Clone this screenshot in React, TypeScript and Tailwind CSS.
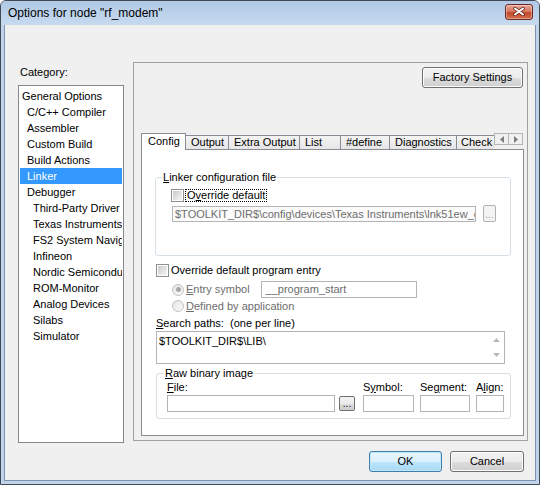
import React from "react";

const ui = "font-['Liberation_Sans',Arial,sans-serif]";

const winBtn =
  "flex items-center justify-center rounded-[3px] border border-[#707070] bg-[linear-gradient(to_bottom,#f2f2f2_0%,#ebebeb_50%,#dddddd_51%,#cfcfcf_100%)] shadow-[inset_0_0_0_1px_#fcfcfc] text-[11px] text-black";

const categories: { label: string; indent: number; selected?: boolean }[] = [
  { label: "General Options", indent: 2 },
  { label: "C/C++ Compiler", indent: 7 },
  { label: "Assembler", indent: 7 },
  { label: "Custom Build", indent: 7 },
  { label: "Build Actions", indent: 7 },
  { label: "Linker", indent: 7, selected: true },
  { label: "Debugger", indent: 7 },
  { label: "Third-Party Driver", indent: 13 },
  { label: "Texas Instruments", indent: 13 },
  { label: "FS2 System Navigator", indent: 13 },
  { label: "Infineon", indent: 13 },
  { label: "Nordic Semiconductor", indent: 13 },
  { label: "ROM-Monitor", indent: 13 },
  { label: "Analog Devices", indent: 13 },
  { label: "Silabs", indent: 13 },
  { label: "Simulator", indent: 13 },
];

const tabs = [
  { label: "Config", w: "w-[45px]" },
  { label: "Output", w: "w-[44px]" },
  { label: "Extra Output", w: "w-[72px]" },
  { label: "List", w: "w-[42px]" },
  { label: "#define", w: "w-[50px]" },
  { label: "Diagnostics", w: "w-[68px]" },
];

function Checkbox() {
  return (
    <span className="flex h-[13px] w-[13px] shrink-0 items-center justify-center border border-[#8e8f8f] bg-white">
      <span className="h-[9px] w-[9px] bg-gradient-to-br from-[#c9c9c9] to-[#f7f7f7]" />
    </span>
  );
}

function Radio({ checked }: { checked?: boolean }) {
  return (
    <span className="flex h-[12px] w-[12px] shrink-0 items-center justify-center rounded-full border border-[#c2c2c2] bg-gradient-to-br from-[#e3e3e3] to-[#fbfbfb]">
      {checked && <span className="h-[5px] w-[5px] rounded-full bg-[#a8a8a8]" />}
    </span>
  );
}

function SmallBrowse({ disabled, h }: { disabled?: boolean; h: string }) {
  return (
    <span
      className={`flex ${h} shrink-0 items-end justify-center rounded-[2px] border pb-[2px] text-[10px] leading-[8px] ${
        disabled
          ? "border-[#adb2b5] bg-[#f4f4f4] text-[#9a9a9a]"
          : "border-[#707070] bg-[linear-gradient(to_bottom,#f2f2f2_0%,#ebebeb_50%,#dddddd_51%,#cfcfcf_100%)] text-black"
      }`}
    >
      ...
    </span>
  );
}

function Arrow({ dir, color }: { dir: "up" | "down" | "left" | "right"; color: string }) {
  const pts = {
    up: "0,4 3.5,0 7,4",
    down: "0,0 3.5,4 7,0",
    left: "4,0 0,3.5 4,7",
    right: "0,0 4,3.5 0,7",
  }[dir];
  const vertical = dir === "up" || dir === "down";
  return (
    <svg width={vertical ? 7 : 4} height={vertical ? 4 : 7} viewBox={vertical ? "0 0 7 4" : "0 0 4 7"}>
      <polygon points={pts} fill={color} />
    </svg>
  );
}

export default function App() {
  return (
    <div className={`${ui} h-[485px] w-[540px] overflow-hidden text-[11px] text-black`}>
      <div className="flex h-full w-full flex-col rounded-t-[6px] border border-[#3f4a56] bg-[#bfd4eb] px-[3px] pb-[3px]">
        {/* title bar */}
        <div className="-mx-[3px] flex h-[24px] shrink-0 items-center justify-between rounded-t-[5px] bg-[linear-gradient(to_bottom,#afc8e5_0%,#bcd2ea_50%,#c6daef_100%)] pl-[7px] pr-[6px]">
          <span className="text-[12px] leading-[14px] text-black">Options for node "rf_modem"</span>
          <span className="mb-[3px] flex h-[16px] w-[28px] items-center justify-center rounded-[3px] border border-[#6b2a22] bg-[linear-gradient(to_bottom,#e8a898_0%,#d9785f_45%,#c3462c_55%,#d2704f_100%)] shadow-[inset_0_0_0_1px_rgba(255,255,255,0.35)]">
            <svg width="12" height="9" viewBox="0 0 12 9">
              <path d="M2 1.5 L10 7.5 M10 1.5 L2 7.5" stroke="#5a1d14" strokeWidth="3.4" strokeLinecap="round" />
              <path d="M2 1.5 L10 7.5 M10 1.5 L2 7.5" stroke="#ffffff" strokeWidth="2" strokeLinecap="round" />
            </svg>
          </span>
        </div>

        {/* client area */}
        <div className="flex flex-1 flex-col border border-t-0 border-[#7d93ad] bg-[#f0f0f0]">
          <div className="mt-[37px] flex pl-[13px]">
            {/* category column */}
            <div className="flex w-[106px] flex-col">
              <div className="h-[23px] pl-[2px] pt-[3px] leading-[14px]">Category:</div>
              <div className="h-[358px] overflow-hidden border border-[#828790] bg-white pt-[2px]">
                {categories.map((c) => (
                  <div
                    key={c.label}
                    className={`mx-px h-[16px] overflow-hidden whitespace-nowrap text-[11px] leading-[16px] ${
                      c.selected ? "bg-[#3399ff] text-white" : "text-black"
                    }`}
                    style={{ paddingLeft: c.indent }}
                  >
                    {c.label}
                  </div>
                ))}
              </div>
            </div>

            {/* options panel */}
            <div className="ml-[9px] flex h-[379px] w-[395px] flex-col border border-[#a0a0a0] pb-[3px] pl-[7px] pr-[3px]">
              <div className="mt-[4px] flex justify-end pr-[1px]">
                <button className={`${winBtn} h-[21px] w-[101px]`}>Factory Settings</button>
              </div>

              {/* tab strip */}
              <div className="mt-[45px] flex h-[16px] items-end">
                {tabs.map((t, i) =>
                  i === 0 ? (
                    <div
                      key={t.label}
                      className={`relative z-10 -mb-px h-[17px] ${t.w} shrink-0 border border-b-0 border-[#898c95] bg-white pl-[6px] pt-[1px] leading-[13px]`}
                    >
                      {t.label}
                    </div>
                  ) : (
                    <div
                      key={t.label}
                      className={`-ml-px h-[14px] ${t.w} shrink-0 border border-b-0 border-[#898c95] bg-[linear-gradient(to_bottom,#f4f4f4,#e6e6e6)] pl-[5px] leading-[13px]`}
                    >
                      {t.label}
                    </div>
                  )
                )}
                <div className="-ml-px h-[14px] w-[38px] shrink-0 overflow-hidden whitespace-nowrap border border-b-0 border-r-0 border-[#898c95] bg-[linear-gradient(to_bottom,#f4f4f4,#e6e6e6)] pl-[4px] leading-[13px]">
                  Check
                </div>
                <div className="flex self-start">
                  <span className="flex h-[12px] w-[15px] items-center justify-center border border-[#b5b5b5] bg-[#f0f0f0]">
                    <Arrow dir="left" color="#7a7a7a" />
                  </span>
                  <span className="-ml-px flex h-[12px] w-[15px] items-center justify-center border border-[#b5b5b5] bg-[#f0f0f0]">
                    <Arrow dir="right" color="#7a7a7a" />
                  </span>
                </div>
              </div>

              {/* tab page */}
              <div className="flex h-[287px] w-[383px] flex-col border border-[#898c95] bg-white">
                <fieldset className="ml-[13px] mt-[20px] w-[356px] rounded-[3px] border border-[#d5dfe5] pb-[33px]">
                  <legend className="ml-[6px] px-[1px] leading-[14px]">
                    <span className="underline">L</span>inker configuration file
                  </legend>
                  <div className="mt-[5px] flex items-center pl-[15px]">
                    <Checkbox />
                    <span className="ml-[1px] border border-dotted border-black px-[1px] leading-[11px]">
                      O<span className="underline">v</span>erride default
                    </span>
                  </div>
                  <div className="mt-[3px] flex items-center pl-[16px]">
                    <div className="h-[16px] w-[304px] overflow-hidden whitespace-nowrap border border-[#b4b4b4] bg-[#fbfbfb] pl-[2px] leading-[14px] text-[#6d6d6d]">
                      $TOOLKIT_DIR$\config\devices\Texas Instruments\lnk51ew_cc2430F128.xcl
                    </div>
                    <span className="ml-[7px]">
                      <SmallBrowse disabled h="h-[17px] w-[13px]" />
                    </span>
                  </div>
                </fieldset>

                <div className="ml-[14px] mt-[8px] flex items-center">
                  <Checkbox />
                  <span className="ml-[2px] leading-[13px]">Override default program entry</span>
                </div>
                <div className="ml-[30px] mt-[4px] flex h-[17px] items-center">
                  <Radio checked />
                  <span className="ml-[2px] text-[#6d6d6d]">
                    <span className="underline">E</span>ntry symbol
                  </span>
                  <div className="ml-[11px] h-[17px] w-[156px] border border-[#b4b4b4] bg-white pl-[4px] leading-[15px] text-[#6d6d6d]">
                    __program_start
                  </div>
                </div>
                <div className="ml-[30px] mt-[1px] flex h-[14px] items-center">
                  <Radio />
                  <span className="ml-[2px] text-[#6d6d6d]">
                    <span className="underline">D</span>efined by application
                  </span>
                </div>

                <div className="ml-[14px] mt-[3px] leading-[14px]">
                  <span className="underline">S</span>earch paths:&nbsp; (one per line)
                </div>
                <div className="ml-[14px] mt-[1px] flex h-[33px] w-[349px] border border-[#b4b4b4] bg-white">
                  <div className="flex-1 pl-[2px] pt-[2px] leading-[14px]">$TOOLKIT_DIR$\LIB\</div>
                  <div className="flex w-[16px] flex-col items-center justify-between py-[6px]">
                    <Arrow dir="up" color="#b9b9b9" />
                    <Arrow dir="down" color="#b9b9b9" />
                  </div>
                </div>

                <fieldset className="ml-[14px] mt-[2px] w-[355px] rounded-[3px] border border-[#d5dfe5] pb-[6px]">
                  <legend className="ml-[7px] px-[1px] leading-[14px]">
                    <span className="underline">R</span>aw binary image
                  </legend>
                  <div className="flex items-end pl-[10px]">
                    <div className="flex flex-col">
                      <span className="leading-[14px]">
                        <span className="underline">F</span>ile:
                      </span>
                      <div className="mt-[1px] h-[17px] w-[168px] border border-[#b4b4b4] bg-white" />
                    </div>
                    <span className="mb-[1px] ml-[4px]">
                      <SmallBrowse h="h-[15px] w-[16px]" />
                    </span>
                    <div className="ml-[8px] flex flex-col">
                      <span className="leading-[14px]">
                        S<span className="underline">y</span>mbol:
                      </span>
                      <div className="mt-[1px] h-[17px] w-[51px] border border-[#b4b4b4] bg-white" />
                    </div>
                    <div className="ml-[6px] flex flex-col">
                      <span className="leading-[14px]">
                        Se<span className="underline">g</span>ment:
                      </span>
                      <div className="mt-[1px] h-[17px] w-[50px] border border-[#b4b4b4] bg-white" />
                    </div>
                    <div className="ml-[6px] flex flex-col">
                      <span className="leading-[14px]">
                        A<span className="underline">l</span>ign:
                      </span>
                      <div className="mt-[1px] h-[17px] w-[28px] border border-[#b4b4b4] bg-white" />
                    </div>
                  </div>
                </fieldset>
              </div>
            </div>
          </div>

          {/* dialog buttons */}
          <div className="mt-[8px] flex justify-end gap-[8px] pr-[11px]">
            <button className="flex h-[21px] w-[73px] items-center justify-center rounded-[3px] border border-[#3c7fb1] bg-[linear-gradient(to_bottom,#eaf6fd_0%,#d9f0fc_50%,#bee6fd_51%,#a7d9f5_100%)] shadow-[inset_0_0_0_1px_#c4e5f6] text-[11px]">
              OK
            </button>
            <button className={`${winBtn} h-[21px] w-[74px]`}>Cancel</button>
          </div>
        </div>
      </div>
    </div>
  );
}
